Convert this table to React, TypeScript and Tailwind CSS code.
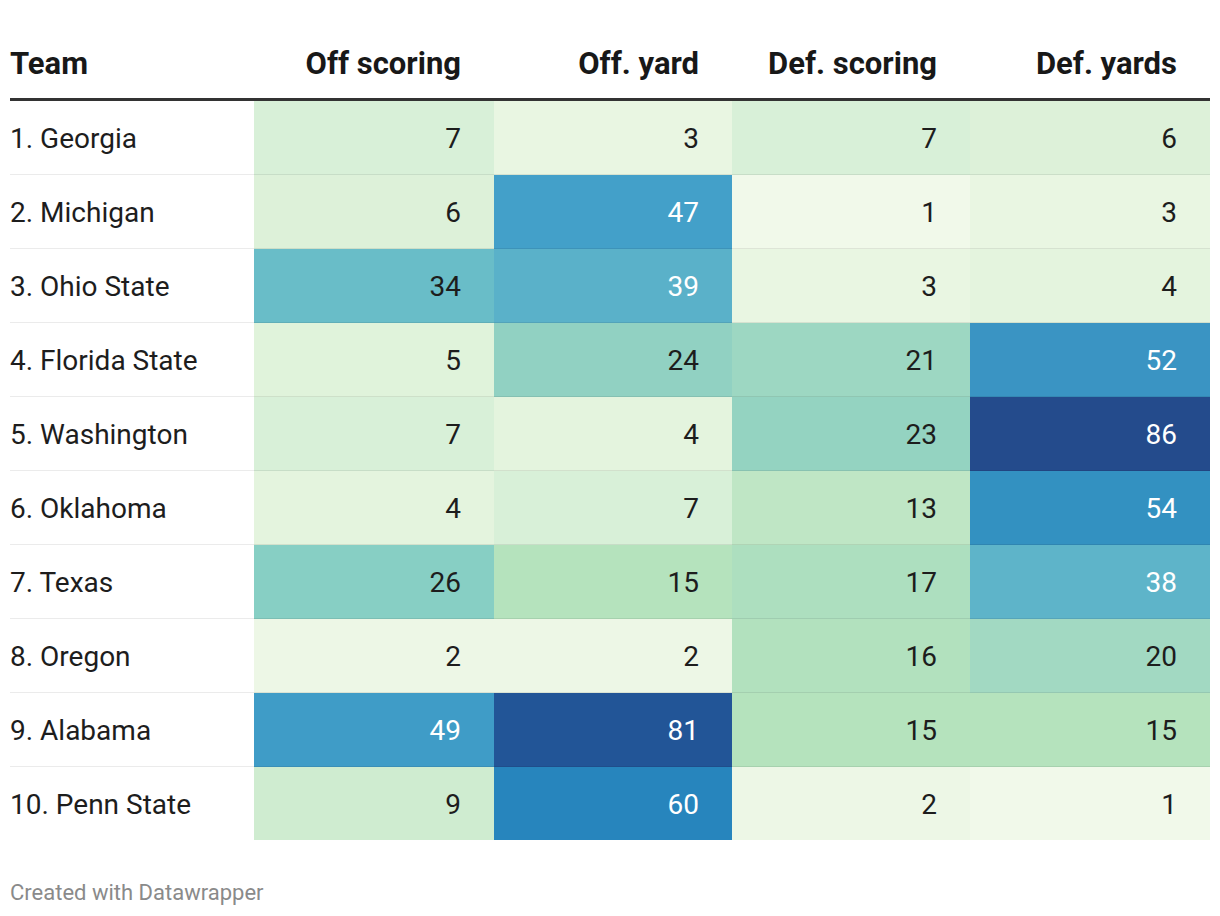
import React from 'react';

type Cell = { v: number; bg: string; light?: boolean };

const COLUMNS = ['Off scoring', 'Off. yard', 'Def. scoring', 'Def. yards'];

// colours picked from the reference, one per cell
const ROWS: { team: string; cells: Cell[] }[] = [
  { team: '1. Georgia', cells: [
    { v: 7, bg: 'bg-[#d8f0d8]' }, { v: 3, bg: 'bg-[#e9f6e2]' }, { v: 7, bg: 'bg-[#d8f0d8]' }, { v: 6, bg: 'bg-[#ddf1d9]' },
  ] },
  { team: '2. Michigan', cells: [
    { v: 6, bg: 'bg-[#ddf1d9]' }, { v: 47, bg: 'bg-[#43a0c9]', light: true }, { v: 1, bg: 'bg-[#f1f9ea]' }, { v: 3, bg: 'bg-[#e9f6e2]' },
  ] },
  { team: '3. Ohio State', cells: [
    { v: 34, bg: 'bg-[#69bdc8]' }, { v: 39, bg: 'bg-[#5ab1c9]', light: true }, { v: 3, bg: 'bg-[#e9f6e2]' }, { v: 4, bg: 'bg-[#e4f4de]' },
  ] },
  { team: '4. Florida State', cells: [
    { v: 5, bg: 'bg-[#e0f3db]' }, { v: 24, bg: 'bg-[#91d1c2]' }, { v: 21, bg: 'bg-[#9dd7c2]' }, { v: 52, bg: 'bg-[#3a94c3]', light: true },
  ] },
  { team: '5. Washington', cells: [
    { v: 7, bg: 'bg-[#d8f0d8]' }, { v: 4, bg: 'bg-[#e4f4de]' }, { v: 23, bg: 'bg-[#94d3c1]' }, { v: 86, bg: 'bg-[#244b8c]', light: true },
  ] },
  { team: '6. Oklahoma', cells: [
    { v: 4, bg: 'bg-[#e4f4de]' }, { v: 7, bg: 'bg-[#d8f0d8]' }, { v: 13, bg: 'bg-[#bfe6c5]' }, { v: 54, bg: 'bg-[#3391c1]', light: true },
  ] },
  { team: '7. Texas', cells: [
    { v: 26, bg: 'bg-[#87cfc4]' }, { v: 15, bg: 'bg-[#b5e3bd]' }, { v: 17, bg: 'bg-[#addfbf]' }, { v: 38, bg: 'bg-[#5eb4c9]', light: true },
  ] },
  { team: '8. Oregon', cells: [
    { v: 2, bg: 'bg-[#edf7e6]' }, { v: 2, bg: 'bg-[#edf7e6]' }, { v: 16, bg: 'bg-[#b2e1be]' }, { v: 20, bg: 'bg-[#a2d9c2]' },
  ] },
  { team: '9. Alabama', cells: [
    { v: 49, bg: 'bg-[#3f9cc7]', light: true }, { v: 81, bg: 'bg-[#225597]', light: true }, { v: 15, bg: 'bg-[#b5e3bd]' }, { v: 15, bg: 'bg-[#b5e3bd]' },
  ] },
  { team: '10. Penn State', cells: [
    { v: 9, bg: 'bg-[#cfecd0]' }, { v: 60, bg: 'bg-[#2785bd]', light: true }, { v: 2, bg: 'bg-[#edf7e6]' }, { v: 1, bg: 'bg-[#f1f9ea]' },
  ] },
];

const GRID = 'grid grid-cols-[244px_240px_238px_238px_240px]';

export default function App() {
  return (
    <div className="w-[1220px] h-[916px] bg-white px-[10px] font-['Roboto','Liberation_Sans',sans-serif] text-[#1d1d1d]">
      {/* Header */}
      <div className={`${GRID} h-[101px] items-end pb-[18px] border-b-[3px] border-[#333333] text-[31px] leading-[32px] font-bold text-[#181818]`}>
        <div>Team</div>
        {COLUMNS.map((c) => (
          <div key={c} className="text-right pr-[33px]">{c}</div>
        ))}
      </div>

      {/* Body */}
      <div>
        {ROWS.map((row, i) => {
          const last = i === ROWS.length - 1;
          return (
            <div
              key={row.team}
              className={`${GRID} relative text-[28px] leading-[30px] ${last ? 'h-[73px]' : 'h-[74px]'}`}
            >
              <div className="flex items-center pt-[2px]">{row.team}</div>
              {row.cells.map((cell, j) => (
                <div
                  key={j}
                  className={`flex items-center justify-end pt-[2px] pr-[33px] ${cell.bg} ${cell.light ? 'text-white' : ''}`}
                >
                  {cell.v}
                </div>
              ))}
              {!last && (
                <div className="absolute left-0 right-0 bottom-0 h-px bg-black/[0.08]" />
              )}
            </div>
          );
        })}
      </div>

      {/* Footer */}
      <div className="mt-[40px] text-[22px] leading-[26px] text-[#8a8a8a]">Created with Datawrapper</div>
    </div>
  );
}
